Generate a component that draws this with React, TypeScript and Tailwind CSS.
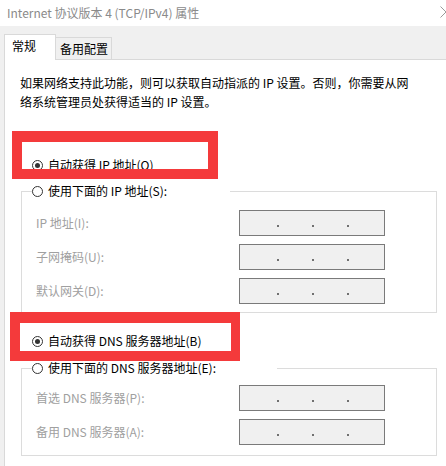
import React from "react";

function Radio({ checked }: { checked?: boolean }) {
  return (
    <span className="flex h-[11px] w-[11px] shrink-0 items-center justify-center rounded-full border border-[#333333] bg-white">
      {checked ? <span className="h-[5px] w-[5px] rounded-full bg-[#333333]" /> : null}
    </span>
  );
}

function IpBox() {
  return (
    <div className="flex h-[26px] w-[146px] items-end gap-[33px] border border-[#7a7a7a] bg-[#f0f0f0] pb-[8px] pl-[37px]">
      <span className="h-[2px] w-[2px] bg-[#707070]" />
      <span className="h-[2px] w-[2px] bg-[#707070]" />
      <span className="h-[2px] w-[2px] bg-[#707070]" />
    </div>
  );
}

function Row({ label }: { label: string }) {
  return (
    <div className="flex h-[26px] items-center">
      <div className="w-[217px] pl-[14px] text-[#a0a0a0]">{label}</div>
      <IpBox />
    </div>
  );
}

export default function App() {
  return (
    <div className="relative flex h-[466px] w-[446px] flex-col overflow-hidden bg-[#f0f0f0] font-['Noto_Sans_CJK_SC',sans-serif] text-[12px] leading-[16px] text-black">
      {/* title bar */}
      <div className="flex h-[26px] shrink-0 items-center justify-between bg-white pl-[7px]">
        <span className="text-[#8a8a8a]">Internet 协议版本 4 (TCP/IPv4) 属性</span>
        <svg width="12" height="12" viewBox="0 0 12 12" className="mr-[-6px] mb-[3px]">
          <path d="M0.5 0.5 L11.5 11.5 M11.5 0.5 L0.5 11.5" stroke="#9a9a9a" strokeWidth="1" fill="none" />
        </svg>
      </div>

      {/* tabs */}
      <div className="relative z-10 -mb-px flex h-[34px] shrink-0 items-end pl-[4px]">
        <div className="h-[26px] w-[52px] border-l border-r border-t border-[#d9d9d9] bg-white pl-[7px] pt-[3px]">
          常规
        </div>
        <div className="mb-px h-[22px] w-[56px] border-r border-t border-[#d9d9d9] bg-[#f0f0f0] pl-[4px] pt-[3px]">
          备用配置
        </div>
      </div>

      {/* panel */}
      <div className="ml-[4px] flex-1 border-l border-t border-[#d9d9d9] bg-white">
        <p className="whitespace-nowrap pl-[15px] pt-[13px] leading-[19px]">
          如果网络支持此功能，则可以获取自动指派的 IP 设置。否则，你需要从网
          <br />
          络系统管理员处获得适当的 IP 设置。
        </p>

        <div className="ml-[27px] mt-[46px] flex h-[16px] items-center gap-[5px]">
          <Radio checked />
          <span>自动获得 IP 地址(O)</span>
        </div>

        <div className="ml-[16px] mt-[18px] w-[416px] border border-[#dcdcdc] pb-[8px]">
          <div className="-mt-[9px] ml-[10px] flex h-[16px] w-[198px] items-center gap-[5px] bg-white">
            <Radio />
            <span>使用下面的 IP 地址(S):</span>
          </div>
          <div className="mt-[11px] flex flex-col gap-[8px]">
            <Row label="IP 地址(I):" />
            <Row label="子网掩码(U):" />
            <Row label="默认网关(D):" />
          </div>
        </div>

        <div className="ml-[27px] mt-[20px] flex h-[16px] items-center gap-[5px]">
          <Radio checked />
          <span>自动获得 DNS 服务器地址(B)</span>
        </div>

        <div className="ml-[16px] mt-[19px] w-[416px] border border-[#dcdcdc] pb-[10px]">
          <div className="-mt-[9px] ml-[10px] flex h-[16px] w-[245px] items-center gap-[5px] bg-white">
            <Radio />
            <span>使用下面的 DNS 服务器地址(E):</span>
          </div>
          <div className="mt-[9px] flex flex-col gap-[8px]">
            <Row label="首选 DNS 服务器(P):" />
            <Row label="备用 DNS 服务器(A):" />
          </div>
        </div>
      </div>

      {/* red annotation frames */}
      <div className="absolute left-[12px] top-[131px] h-[48px] w-[206px] border-[10px] border-t-[11px] border-[#f43a3b]" />
      <div className="absolute left-[10px] top-[312px] h-[49px] w-[230px] border-[10px] border-t-[11px] border-r-[9px] border-[#f43a3b]" />
    </div>
  );
}
